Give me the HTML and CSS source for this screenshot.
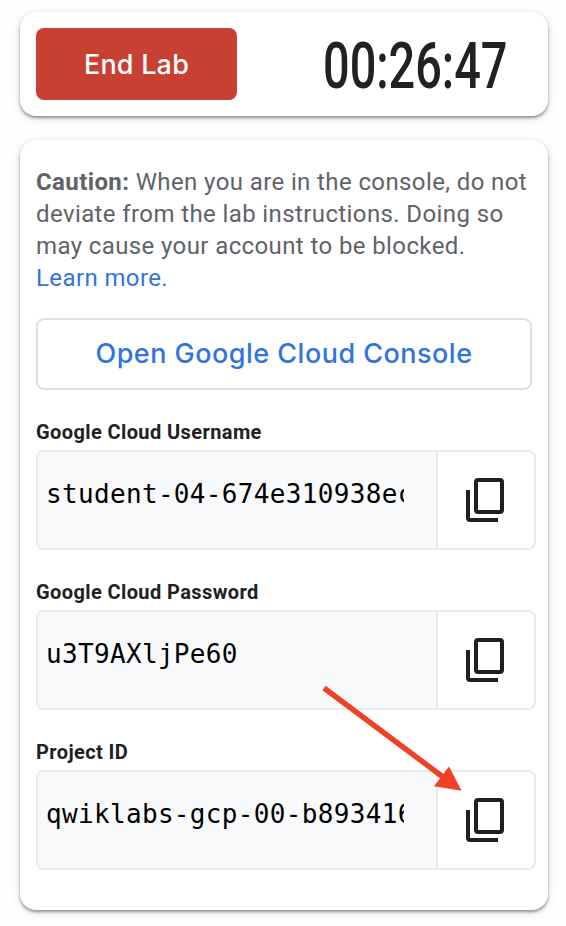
FILE: index.html
```html
<!DOCTYPE html>
<html lang="en">
<head>
<meta charset="utf-8">
<title>Lab control panel</title>
<link rel="stylesheet" href="styles.css">
</head>
<body>
<svg class="defs" aria-hidden="true">
  <symbol id="copy" viewBox="0 0 38 44">
    <rect x="10" y="2" width="26" height="32" rx="2"/>
    <path d="M2 12V40Q2 42 4 42H32"/>
  </symbol>
</svg>
<main class="panel">
  <section class="card control">
    <button class="end"><span>End Lab</span></button>
    <div class="timer"><span>00:26:47</span></div>
  </section>
  <section class="card details">
    <p class="caution"><strong>Caution:</strong> When you are in the console, do not<br>deviate from the lab instructions. Doing so<br>may cause your account to be blocked.<br><a class="learn">Learn more.</a></p>
    <button class="open"><span>Open Google Cloud Console</span></button>
    <div class="field">
      <div class="label">Google Cloud Username</div>
      <div class="box">
        <div class="value"><span>student-04-674e310938ec</span></div>
        <button class="copy"><svg><use href="#copy"/></svg></button>
      </div>
    </div>
    <div class="field">
      <div class="label">Google Cloud Password</div>
      <div class="box">
        <div class="value"><span>u3T9AXljPe60</span></div>
        <button class="copy"><svg><use href="#copy"/></svg></button>
      </div>
    </div>
    <div class="field">
      <div class="label">Project ID</div>
      <div class="box">
        <div class="value"><span>qwiklabs-gcp-00-b893416</span></div>
        <button class="copy"><svg><use href="#copy"/></svg></button>
      </div>
    </div>
    <svg class="arrow" viewBox="0 0 142 108">
      <path d="M4 3L123 92" fill="none" stroke="#ee4126" stroke-width="5.4"/>
      <path d="M141.6 105.8L129 81.5L114 101.2Z" fill="#ee4126"/>
    </svg>
  </section>
</main>
</body>
</html>
```
FILE: styles.css
```css
* { box-sizing: border-box; }
html { background: #fefefe; }
body {
  margin: 0;
  height: 926px;
  padding: 12px 0 0 20px;
  font-family: Roboto, sans-serif;
}
button { font: inherit; padding: 0; margin: 0; background: #fff; }
.defs { position: absolute; width: 0; height: 0; }
.panel {
  width: 528px;
  display: flex;
  flex-direction: column;
  gap: 24px;
}
.card {
  position: relative;
  background: #fff;
  border-radius: 16px;
  padding: 16px;
  box-shadow: 0 2px 3px rgba(60, 60, 60, .5), 0 2px 10px rgba(60, 60, 60, .14);
}
.control { height: 104px; display: flex; }
.end {
  width: 201px;
  height: 72px;
  border: 0;
  border-radius: 8px;
  background: #c74032;
  color: #fff;
  font-family: Inter, sans-serif;
  font-size: 27px;
  font-weight: 500;
  letter-spacing: .2px;
}
.timer {
  width: 185px;
  height: 72px;
  margin-left: 86px;
  color: #202124;
  font-size: 64px;
  font-weight: 500;
  line-height: 78px;
  white-space: nowrap;
}
.timer span { display: inline-block; transform: scaleX(.732); transform-origin: 0 0; }
.details { height: 770px; }
.caution {
  margin: 10px 0 24px;
  color: #5f6368;
  font-size: 24px;
  line-height: 32px;
  letter-spacing: .39px;
  white-space: nowrap;
}
.learn { color: #3174e0; }
.open {
  width: 496px;
  height: 72px;
  display: block;
  padding-bottom: 2px;
  border: 2px solid #dce0e7;
  border-radius: 8px;
  color: #3174e0;
  font-family: Inter, sans-serif;
  font-size: 27px;
  font-weight: 500;
  letter-spacing: .48px;
}
.field { margin-top: 28px; }
.label {
  height: 32px;
  line-height: 28px;
  color: #202124;
  font-size: 20px;
  font-weight: 700;
  letter-spacing: .4px;
}
.box {
  display: flex;
  width: 500px;
  height: 100px;
  border: 2px solid #e8eaed;
  border-radius: 8px;
  overflow: hidden;
}
.value {
  width: 400px;
  padding: 22px 32px 0 8px;
  background: #f8f9fb;
  border-right: 2px solid #e8eaed;
  color: #000;
  font-family: "DejaVu Sans Mono", monospace;
  font-size: 26px;
  line-height: 40px;
  letter-spacing: .33px;
}
.value span { display: block; overflow: hidden; white-space: nowrap; }
.copy {
  flex: 1;
  border: 0;
  display: flex;
  align-items: center;
  justify-content: center;
  padding-right: 2px;
}
.copy svg { width: 38px; height: 44px; fill: none; stroke: #202020; stroke-width: 4; }
.arrow {
  position: absolute;
  left: 300px;
  top: 545px;
  width: 142px;
  height: 108px;
}
```
